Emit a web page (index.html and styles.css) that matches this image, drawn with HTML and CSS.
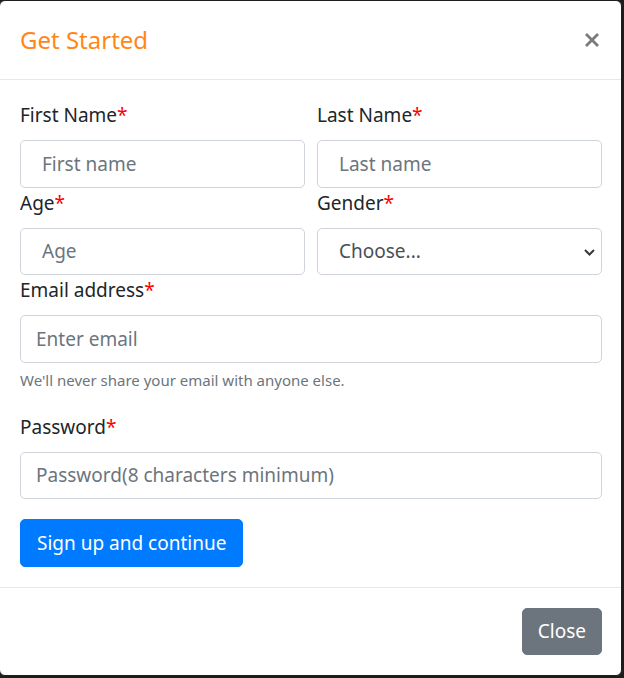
FILE: index.html
```html
<!DOCTYPE html>
<html lang="en">
<head>
<meta charset="utf-8">
<title>Get Started</title>
<link rel="stylesheet" href="styles.css">
</head>
<body>
<div class="modal">
  <div class="modal-header">
    <h5 class="modal-title">Get Started</h5>
    <button class="close" type="button" aria-label="Close">
      <svg width="14" height="14" viewBox="0 0 14 14"><path d="M1 1L13 13M13 1L1 13" stroke="#7b7b7b" stroke-width="2.8" stroke-linecap="butt"/></svg>
    </button>
  </div>
  <div class="modal-body">
    <div class="form-row">
      <div class="col">
        <label class="label">First Name<span class="req">*</span></label>
        <input class="control pad-lg" type="text" placeholder="First name">
      </div>
      <div class="col">
        <label class="label">Last Name<span class="req">*</span></label>
        <input class="control pad-lg" type="text" placeholder="Last name">
      </div>
    </div>
    <div class="form-row">
      <div class="col">
        <label class="label">Age<span class="req">*</span></label>
        <input class="control pad-lg" type="text" placeholder="Age">
      </div>
      <div class="col">
        <label class="label">Gender<span class="req">*</span></label>
        <div class="select-wrap">
          <select class="control pad-lg select">
            <option>Choose...</option>
            <option>Male</option>
            <option>Female</option>
          </select>
          <svg class="chevron" width="11" height="7" viewBox="0 0 11 7"><path d="M1 1L5.5 5.5L10 1" fill="none" stroke="#343a40" stroke-width="2"/></svg>
        </div>
      </div>
    </div>
    <div class="group">
      <label class="label">Email address<span class="req">*</span></label>
      <input class="control" type="email" placeholder="Enter email">
      <small class="help">We'll never share your email with anyone else.</small>
    </div>
    <div class="group">
      <label class="label">Password<span class="req">*</span></label>
      <input class="control" type="password" placeholder="Password(8 characters minimum)">
    </div>
    <button class="btn btn-primary" type="button">Sign up and continue</button>
  </div>
  <div class="modal-footer">
    <button class="btn btn-secondary" type="button">Close</button>
  </div>
</div>
</body>
</html>
```
FILE: styles.css
```css
* { box-sizing: border-box; }

html, body {
  margin: 0;
  background: #1d1d1d;
}

body {
  font-family: "Noto Sans", "Open Sans", sans-serif;
  color: #212529;
  width: 624px;
  height: 678px;
  overflow: hidden;
}

.modal {
  width: 623px;
  height: 676px;
  margin-left: -1px;
  background: #fff;
  border: 1px solid #1d1d1d;
  border-radius: 6px;
  display: flex;
  flex-direction: column;
}

.modal-header {
  display: flex;
  align-items: center;
  justify-content: space-between;
  padding: 20px 19px 20px 20px;
  border-bottom: 1px solid #e6e8ea;
}

.modal-title {
  margin: 0;
  font-size: 24px;
  font-weight: 400;
  line-height: 38px;
  color: #ff8718;
}

.close {
  background: none;
  border: 0;
  padding: 0;
  margin: 0 3px 0 0;
  width: 14px;
  height: 14px;
  display: flex;
  cursor: pointer;
}

.modal-body {
  padding: 20px 19px 20px 20px;
}

.form-row {
  display: grid;
  grid-template-columns: 1fr 1fr;
  column-gap: 12px;
}

.label {
  display: block;
  font-size: 19px;
  line-height: 30px;
  margin-bottom: 10px;
}

.req { color: #ff0000; }

.control {
  display: block;
  width: 100%;
  height: 47.5px;
  border: 1px solid #ced4da;
  border-radius: 5px;
  padding: 0 15px;
  font-family: inherit;
  font-size: 19px;
  color: #495057;
  background: #fff;
  outline: none;
}

.control::placeholder { color: #6c757d; opacity: 1; }

.pad-lg { padding: 0 21px; }

.select-wrap { position: relative; }

.select {
  appearance: none;
  -webkit-appearance: none;
  color: #495057;
}

.chevron {
  position: absolute;
  right: 7px;
  top: 21px;
  pointer-events: none;
}

.group { margin-bottom: 20px; }

.help {
  display: block;
  margin-top: 5px;
  font-size: 15px;
  line-height: 24px;
  color: #6c757d;
}

.btn {
  display: inline-block;
  height: 47.5px;
  padding: 0 16px;
  border: 1px solid transparent;
  border-radius: 5px;
  font-family: inherit;
  font-size: 19px;
  color: #fff;
  cursor: pointer;
}

.btn-primary { background: #007bff; border-color: #007bff; }

.btn-secondary { background: #6c757d; border-color: #6c757d; padding: 0 15px; }

.modal-footer {
  display: flex;
  justify-content: flex-end;
  padding: 20px 19px 20px 20px;
  border-top: 1px solid #e6e8ea;
  margin-top: auto;
}
```
